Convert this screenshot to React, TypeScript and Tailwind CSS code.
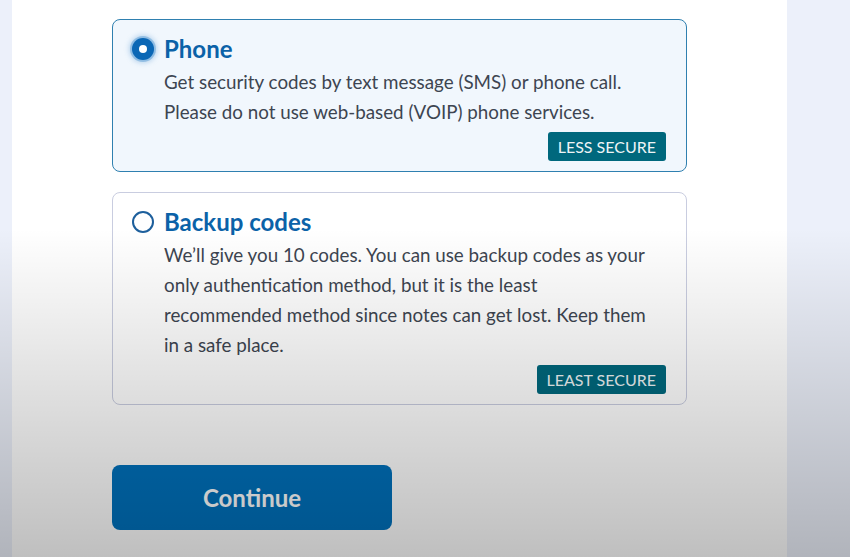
const Radio = ({ checked }: { checked: boolean }) =>
  checked ? (
    <span className="mt-[7px] flex size-[22px] shrink-0 items-center justify-center rounded-full bg-[#0b67b5] shadow-[0_0_0_2px_rgba(80,150,210,0.45),0_0_5px_3px_rgba(80,150,210,0.35)]">
      <span className="size-[8px] rounded-full bg-white" />
    </span>
  ) : (
    <span className="mt-[7px] size-[22px] shrink-0 rounded-full border-2 border-[#1d5f9c] bg-white" />
  );

type Option = {
  title: string;
  lines: string[];
  badge: string;
  checked: boolean;
};

const options: Option[] = [
  {
    title: "Phone",
    lines: [
      "Get security codes by text message (SMS) or phone call.",
      "Please do not use web-based (VOIP) phone services.",
    ],
    badge: "LESS SECURE",
    checked: true,
  },
  {
    title: "Backup codes",
    lines: [
      "We’ll give you 10 codes. You can use backup codes as your",
      "only authentication method, but it is the least",
      "recommended method since notes can get lost. Keep them",
      "in a safe place.",
    ],
    badge: "LEAST SECURE",
    checked: false,
  },
];

const OptionCard = ({ option }: { option: Option }) => (
  <div
    className={
      option.checked
        ? "flex flex-col rounded-lg border border-[#2f80b0] bg-[#f1f7fd] pb-[10px] pl-[19px] pr-[20px] pt-[11px]"
        : "flex flex-col rounded-lg border border-[#c9cde0] bg-white pb-[10px] pl-[19px] pr-[20px] pt-[11px]"
    }
  >
    <div className="flex gap-[10px]">
      <Radio checked={option.checked} />
      <div className="flex flex-col">
        <h2 className="text-[24px] font-bold leading-[36px] text-[#0b62a8]">{option.title}</h2>
        {option.lines.map((line) => (
          <p key={line} className="text-[18.8px] leading-[30px] text-[#3d4551]">
            {line}
          </p>
        ))}
      </div>
    </div>
    <div className="mt-[5px] flex justify-end">
      <span className="flex h-[29px] items-center rounded-[3px] bg-[#00687d] px-[10px] text-[16px] text-[#eef4f6]">
        {option.badge}
      </span>
    </div>
  </div>
);

export default function App() {
  return (
    <div
      className="relative flex h-[557px] w-[850px] overflow-hidden bg-[#ecf0fa]"
      style={{ fontFamily: "Lato, 'Liberation Sans', sans-serif" }}
    >
      <div className="ml-[12px] h-full w-[775px] bg-white pl-[100px] pt-[19px]">
        <div className="flex w-[575px] flex-col gap-[20px]">
          {options.map((option) => (
            <OptionCard key={option.title} option={option} />
          ))}
        </div>
        <button
          type="button"
          className="mt-[60px] flex h-[65px] w-[280px] items-center justify-center rounded-lg bg-[#0071bc] text-[24px] font-bold text-white"
        >
          Continue
        </button>
      </div>
      <div className="pointer-events-none absolute inset-0 bg-[linear-gradient(to_bottom,transparent_41%,rgba(0,0,0,0.25)_100%)]" />
    </div>
  );
}
